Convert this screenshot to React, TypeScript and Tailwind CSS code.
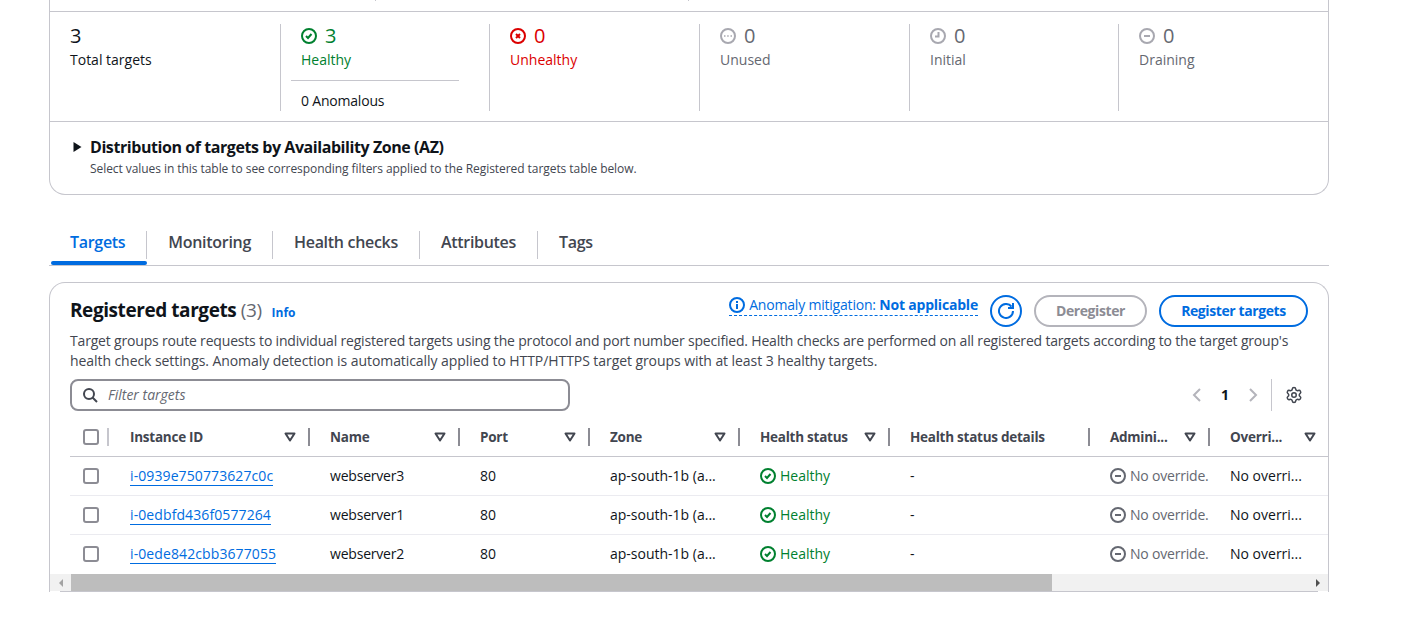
import { Settings } from 'lucide-react'

const stats = [
  { value: '3', label: 'Total targets', icon: null, num: 'text-[#0f141a]', text: 'text-[#0f141a]' },
  { value: '3', label: 'Healthy', icon: 'ok', num: 'text-[#00802f]', text: 'text-[#00802f]' },
  { value: '0', label: 'Unhealthy', icon: 'bad', num: 'text-[#db0000]', text: 'text-[#db0000]' },
  { value: '0', label: 'Unused', icon: 'dots', num: 'text-[#656871]', text: 'text-[#656871]' },
  { value: '0', label: 'Initial', icon: 'clock', num: 'text-[#656871]', text: 'text-[#656871]' },
  { value: '0', label: 'Draining', icon: 'stop', num: 'text-[#656871]', text: 'text-[#656871]' },
]

const tabs = ['Targets', 'Monitoring', 'Health checks', 'Attributes', 'Tags']

const columns = [
  { name: 'Instance ID', filter: true },
  { name: 'Name', filter: true },
  { name: 'Port', filter: true },
  { name: 'Zone', filter: true },
  { name: 'Health status', filter: true },
  { name: 'Health status details', filter: false },
  { name: 'Admini...', filter: true },
  { name: 'Overri...', filter: true, last: true },
]

const rows = [
  { id: 'i-0939e750773627c0c', name: 'webserver3' },
  { id: 'i-0edbfd436f0577264', name: 'webserver1' },
  { id: 'i-0ede842cbb3677055', name: 'webserver2' },
]

const gridCols = 'grid grid-cols-[40px_200px_150px_130px_150px_150px_200px_120px_118px]'

const StatusIcon = ({ type, className }: { type: string; className: string }) => (
  <svg viewBox="0 0 16 16" fill="none" stroke="currentColor" strokeWidth="2" className={className}>
    <circle cx="8" cy="8" r="7" />
    {type === 'ok' && <path d="m5 8 2 2 3.5-4" />}
    {type === 'bad' && <path d="m10 6-4 4M10 10 6 6" />}
    {type === 'dots' && <path strokeWidth="1.5" d="M4 8h1.5M7.2 8h1.5M10.5 8H12" />}
    {type === 'clock' && <path d="M8.5 4v4.5H5" />}
    {type === 'stop' && <path d="M11 8H5" />}
  </svg>
)

const Caret = () => (
  <svg viewBox="0 0 16 16" fill="none" stroke="currentColor" strokeWidth="2" strokeLinejoin="round" className="h-[16px] w-[16px] text-[#424650]">
    <path d="M3.5 4.5h9L8 11.5z" />
  </svg>
)

const Check = () => <div className="h-[16px] w-[16px] rounded-[3px] border-2 border-[#8c8c94] bg-white" />

export default function App() {
  return (
    <div className="h-[617px] w-[1415px] overflow-hidden bg-white pl-[49px] font-['Open_Sans','Noto_Sans',sans-serif] text-[14px] leading-[20px] text-[#0f141a]">
      <div className="w-[1280px]">
        {/* Target summary */}
        <div className="rounded-b-[16px] border-x border-b border-[#c6c6cd]">
          <div className="relative h-[12px] border-b border-[#c6c6cd]">
            <div className="absolute left-[325px] top-0 h-px w-px bg-[#c6c6cd]" />
            <div className="absolute left-[638px] top-0 h-px w-px bg-[#c6c6cd]" />
          </div>
          <div className="grid h-[110px] grid-cols-[210px_209px_210px_210px_209px_1fr] border-b border-[#c6c6cd] pl-[20px] pt-[12px]">
            {stats.map((s, i) => (
              <div key={i} className={`h-[87px] ${i > 0 ? 'border-l border-[#c6c6cd] pl-[20px]' : ''}`}>
                <div className={`flex h-[24px] items-center gap-[8px] text-[20px] ${s.num}`}>
                  {s.icon && (
                    <StatusIcon type={s.icon} className={`h-[16px] w-[16px] ${s.icon === 'ok' || s.icon === 'bad' ? '' : 'text-[#a8a8b0]'}`} />
                  )}
                  <span>{s.value}</span>
                </div>
                <div className={`mt-[2px] ${s.text}`}>{s.label}</div>
                {i === 1 && (
                  <div className="-ml-[10px] mt-[10px] w-[168px] border-t border-[#c6c6cd] pl-[10px] pt-[10px] tracking-[-0.2px]">0 Anomalous</div>
                )}
              </div>
            ))}
          </div>
          <div className="h-[72px] pl-[20px] pt-[15px]">
            <div className="flex items-center gap-[4px] text-[16px] font-bold leading-[20px] tracking-[-0.43px]">
              <svg viewBox="0 0 16 16" className="h-[16px] w-[16px] fill-[#0f141a]">
                <path d="M3.5 3v10l8-5z" />
              </svg>
              Distribution of targets by Availability Zone (AZ)
            </div>
            <div className="ml-[20px] mt-[4px] text-[12px] leading-[16px] tracking-[-0.06px] text-[#424650]">
              Select values in this table to see corresponding filters applied to the Registered targets table below.
            </div>
          </div>
        </div>

        {/* Tabs */}
        <div className="mt-[31px] flex h-[40px] border-b border-[#c6c6cd] pl-[2px]">
          {tabs.map((t, i) => (
            <div key={t} className="relative h-[35px] pt-[5px]">
              <div className={`h-[28px] text-[16px] font-semibold leading-[22px] tracking-[-0.3px] ${i === 0 ? 'pl-[19px] pr-[21px] text-[#006ce0]' : 'px-[21px] text-[#424650]'} ${i < 4 ? 'border-r border-[#c6c6cd]' : ''}`}>
                {t}
              </div>
              {i === 0 && <div className="absolute bottom-[-4px] left-0 right-0 h-[4px] rounded-[2px] bg-[#006ce0]" />}
            </div>
          ))}
        </div>

        {/* Registered targets */}
        <div className="mt-[16px] h-[310px] overflow-hidden rounded-t-[16px] border-x border-t border-[#c6c6cd]">
          <div className="flex h-[48px] items-start justify-between px-[20px] pt-[12px]">
            <div className="flex items-baseline gap-[10px] pt-[3px]">
              <div className="text-[19px] font-bold leading-[24px] tracking-[-0.43px]">
                Registered targets <span className="font-normal text-[#656871]">(3)</span>
              </div>
              <span className="text-[12px] font-bold text-[#006ce0]">Info</span>
            </div>
            <div className="flex items-start gap-[12px]">
              <div className="flex h-[21px] items-center gap-[4px] border-b border-dashed border-[#006ce0] tracking-[-0.2px] text-[#006ce0]">
                <svg viewBox="0 0 16 16" fill="none" stroke="currentColor" strokeWidth="2" className="h-[16px] w-[16px]">
                  <circle cx="8" cy="8" r="7" />
                  <path d="M8 12V7M8 6V4" />
                </svg>
                <span>
                  Anomaly mitigation: <b>Not applicable</b>
                </span>
              </div>
              <div className="flex h-[32px] w-[32px] items-center justify-center rounded-full border-2 border-[#006ce0] text-[#006ce0]">
                <svg viewBox="0 0 16 16" fill="none" stroke="currentColor" strokeWidth="2" className="h-[16px] w-[16px]">
                  <path d="M10 5h5V0M15 8a7 7 0 1 1-1.5-4.35" />
                </svg>
              </div>
              <div className="flex h-[32px] w-[113px] items-center justify-center rounded-full border-2 border-[#b4b4bb] font-bold tracking-[-0.4px] text-[#8c8c94]">
                Deregister
              </div>
              <div className="flex h-[32px] w-[149px] items-center justify-center rounded-full border-2 border-[#006ce0] font-bold tracking-[-0.4px] text-[#006ce0]">
                Register targets
              </div>
            </div>
          </div>
          <div className="whitespace-nowrap px-[20px] text-[#424650]">
            <div className="tracking-[-0.18px]">
              Target groups route requests to individual registered targets using the protocol and port number specified. Health checks are performed on all registered targets according to the target group's
            </div>
            <div className="tracking-[-0.07px]">
              health check settings. Anomaly detection is automatically applied to HTTP/HTTPS target groups with at least 3 healthy targets.
            </div>
          </div>

          <div className="flex items-center justify-between pl-[20px] pr-[25px] pt-[8px]">
            <div className="flex h-[32px] w-[500px] items-center gap-[10px] rounded-[8px] border-2 border-[#8c8c94] px-[10px] italic text-[#656871]">
              <svg viewBox="0 0 16 16" fill="none" stroke="#424650" strokeWidth="2" className="h-[16px] w-[16px] shrink-0">
                <circle cx="7" cy="7" r="5" />
                <path d="m15 15-4.5-4.5" />
              </svg>
              Filter targets
            </div>
            <div className="flex items-center">
              <svg viewBox="0 0 16 16" fill="none" stroke="#b4b4bb" strokeWidth="2" className="h-[16px] w-[16px]">
                <path d="M11 2 5 8l6 6" />
              </svg>
              <span className="ml-[14px] w-[12px] text-center font-bold">1</span>
              <svg viewBox="0 0 16 16" fill="none" stroke="#b4b4bb" strokeWidth="2" className="ml-[14px] h-[16px] w-[16px]">
                <path d="m5 2 6 6-6 6" />
              </svg>
              <div className="ml-[10px] h-[32px] border-l border-[#c6c6cd]" />
              <Settings size={18} strokeWidth={2} className="ml-[13px] text-[#424650]" />
            </div>
          </div>

          {/* Table */}
          <div className="ml-[20px] mt-[8px] overflow-hidden">
            <div className={`${gridCols} h-[38px] items-center border-b border-[#c6c6cd] pb-px`}>
              <div className="flex items-center justify-between pl-[13px]">
                <Check />
                <div className="mr-px h-[18px] w-[2px] bg-[#c6c6cd]" />
              </div>
              {columns.map((c) => (
                <div key={c.name} className="flex h-[18px] items-center justify-between text-[13.5px] font-bold tracking-[-0.25px] text-[#424650]">
                  <span className="pl-[20px]">{c.name}</span>
                  <div className={`flex h-[18px] items-center ${c.last ? 'pr-[10px]' : 'border-r-2 border-[#8c8c94] pr-[10px]'}`}>
                    {c.filter && <Caret />}
                  </div>
                </div>
              ))}
            </div>
            {rows.map((r, i) => (
              <div key={r.id} className={`${gridCols} h-[39px] items-center border-b ${i < 2 ? 'border-[#ebebf0]' : 'border-transparent'}`}>
                <div className="flex items-center pl-[13px]"><Check /></div>
                <div className="pl-[20px]">
                  <span className="border-b border-[#006ce0] tracking-[0.1px] text-[#006ce0]">{r.id}</span>
                </div>
                <div className="pl-[20px] tracking-[-0.2px]">{r.name}</div>
                <div className="pl-[20px]">80</div>
                <div className="pl-[20px]">ap-south-1b (a...</div>
                <div className="flex items-center gap-[4px] pl-[20px] text-[#00802f]">
                  <StatusIcon type="ok" className="h-[16px] w-[16px]" />
                  Healthy
                </div>
                <div className="pl-[20px]">-</div>
                <div className="flex items-center gap-[4px] whitespace-nowrap pl-[20px] tracking-[-0.2px] text-[#656871]">
                  <StatusIcon type="stop" className="h-[16px] w-[16px] shrink-0" />
                  No override.
                </div>
                <div className="whitespace-nowrap pl-[20px]">No overri...</div>
              </div>
            ))}
          </div>

          {/* Scrollbar */}
          <div className="flex h-[17px] items-stretch bg-[#f1f1f1]">
            <div className="flex w-[21px] items-center justify-center">
              <div className="h-0 w-0 border-y-[4px] border-r-[4px] border-y-transparent border-r-[#a3a3a3]" />
            </div>
            <div className="w-[981px] bg-[#bdbdbd]" />
            <div className="flex flex-1 items-center justify-end pr-[8px]">
              <div className="h-0 w-0 border-y-[4px] border-l-[4px] border-y-transparent border-l-[#505050]" />
            </div>
          </div>
          <div className="mx-[10px] h-px bg-[#c6c6cd]" />
        </div>
      </div>
    </div>
  )
}
